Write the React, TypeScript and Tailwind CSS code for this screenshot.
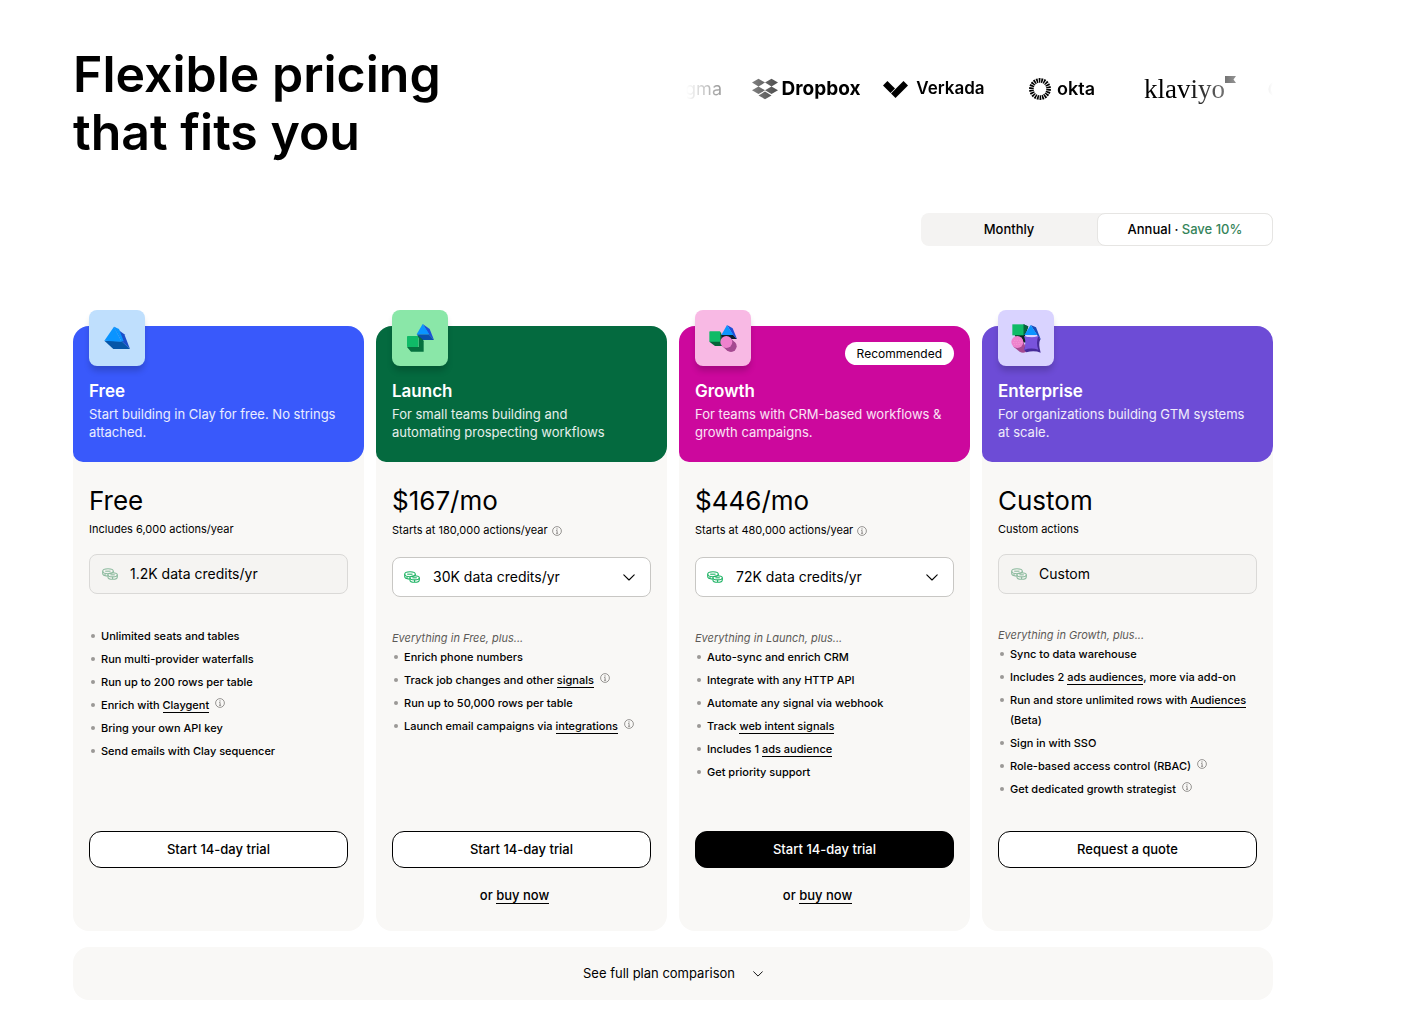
import { useState, type ReactNode } from "react";

interface Plan {
  name: string;
  description: ReactNode;
  headerClass: string;
  tileClass: string;
  art: ReactNode;
  recommended?: boolean;
  price: string;
  actions: string;
  actionsInfo?: boolean;
  credits: string;
  selectable?: boolean;
  inherits?: string;
  features: ReactNode[];
  cta: string;
  primary?: boolean;
  buyNow?: boolean;
}

const InfoIcon = () => (
  <svg
    viewBox="0 0 10 10"
    className="inline-block size-2.5 shrink-0 text-[#7d7b78]"
    fill="none"
    stroke="currentColor"
    aria-hidden="true"
  >
    <circle cx="5" cy="5" r="4.4" strokeWidth="0.8" />
    <path d="M4.2 4.5H5.1V7.3M4 7.3H6.1" strokeWidth="0.8" />
    <circle cx="5" cy="2.9" r="0.6" fill="currentColor" stroke="none" />
  </svg>
);

const FeatureInfo = () => (
  <span className="ml-1.5 inline-block align-[3px] leading-none">
    <InfoIcon />
  </span>
);

const Chevron = ({ className }: { className: string }) => (
  <svg
    viewBox="0 0 12 7"
    className={className}
    fill="none"
    stroke="currentColor"
    strokeWidth="1.1"
    strokeLinecap="round"
    strokeLinejoin="round"
    aria-hidden="true"
  >
    <path d="M0.8 0.8L6 6L11.2 0.8" />
  </svg>
);

const CoinsIcon = ({ className }: { className: string }) => (
  <svg
    viewBox="0 0 16 12"
    className={className}
    fill="none"
    stroke="currentColor"
    strokeWidth="1.1"
    aria-hidden="true"
  >
    <ellipse cx="6" cy="3.2" rx="5.3" ry="2.5" />
    <path d="M0.7 3.2V5.6C0.7 7 2.9 8 5.4 8.1M11.3 3.2V4.6M3 5.4V7.5" />
    <path d="M3.2 3.2H8.5" />
    <ellipse cx="10.6" cy="6.8" rx="4.7" ry="2.1" />
    <path d="M5.9 6.8V9C5.9 10.3 8 11.3 10.6 11.3S15.3 10.3 15.3 9V6.8M10.6 8.9V11.2" />
    <path d="M8.4 6.8H12.8" />
  </svg>
);

const TextLink = ({ children }: { children: ReactNode }) => (
  <a href="#" className="border-b border-black">
    {children}
  </a>
);

const FreeArt = () => (
  <svg viewBox="0 0 168 168" className="size-14" aria-hidden="true">
    <path d="M75 50L106 73L123 117L98 94Z" fill="#1b4fc9" />
    <path d="M46 92L98 94L123 117H73Z" fill="#0556a8" />
    <path d="M75 50L46 92L98 95Z" fill="#0a94ff" />
    <path d="M75 50L90 57L104 94H98Z" fill="#0a94ff" />
  </svg>
);

const LaunchArt = () => (
  <svg viewBox="0 0 168 168" className="size-14" aria-hidden="true">
    <path d="M92 42L113 57L126 90L110 73Z" fill="#1d4ed8" />
    <path d="M74 73H110L126 90H90Z" fill="#0a50ad" />
    <path d="M92 42L74 73H112Z" fill="#0a94ff" />
    <path d="M76 75L92 90L94 96L80 84Z" fill="#06261f" />
    <path d="M80 78L95 92V125H57L45 111H80Z" fill="#05713f" />
    <rect x="45" y="78" width="34" height="33" rx="2" fill="#0fbb67" />
  </svg>
);

const GrowthArt = () => (
  <svg viewBox="0 0 168 168" className="size-14" aria-hidden="true">
    <path d="M43 95L60 108H84L78 66Z" fill="#056338" />
    <path d="M78 74H114L126 87H80Z" fill="#081f2c" />
    <path d="M96 45L113 55L126 87L114 75Z" fill="#1d4ed8" />
    <path d="M96 45L79 75H115Z" fill="#0a94ff" />
    <rect x="43" y="64" width="33" height="31" rx="2" fill="#0fbb67" />
    <circle cx="108" cy="109" r="17" fill="#a54a91" />
    <path d="M82 109L107 84L120 98L97 122Z" fill="#a54a91" />
    <circle cx="94" cy="96" r="18" fill="#ee82cd" />
  </svg>
);

const EnterpriseArt = () => (
  <svg viewBox="0 0 168 168" className="size-14" aria-hidden="true">
    <path d="M50 74L77 43L91 50L80 80L125 88L110 96L60 98Z" fill="#06251f" />
    <path d="M77 43L91 49L80 75H77Z" fill="#07653e" />
    <path d="M98 45L114 52L129 90L117 75Z" fill="#194bb8" />
    <path d="M98 45L79 75H118Z" fill="#0a94ff" />
    <rect x="43" y="43" width="34" height="33" fill="#0fbb67" />
    <path d="M46 110L70 82L88 122Q78 132 65 125Z" fill="#a54a91" />
    <circle cx="58" cy="96" r="18" fill="#ee82cd" />
    <path
      d="M48 91H69M45 97H72M49 103H69"
      stroke="#fbb2dc"
      strokeWidth="2"
      strokeDasharray="2 3"
    />
    <path
      d="M121 79L127 88Q120 102 128 128Q108 120 85 127L78 119L84 100Z"
      fill="#472b99"
    />
    <path
      d="M78 78Q99 86 121 78Q113 99 121 119Q99 112 78 120Q86 99 78 78Z"
      fill="#7953dc"
    />
  </svg>
);

const DropboxLogo = () => (
  <span className="flex items-center gap-1">
    <svg
      viewBox="0 1 24 22"
      className="h-[22px] w-[26px] text-[#555]"
      fill="currentColor"
      preserveAspectRatio="none"
      aria-hidden="true"
    >
      <path d="M6 1.8L0 5.6l6 3.8 6-3.8zM18 1.8l-6 3.8 6 3.8 6-3.8zM0 13.3l6 3.8 6-3.8-6-3.8zM18 9.5l-6 3.8 6 3.8 6-3.8zM6 18.4l6 3.8 6-3.8-6-3.8z" />
    </svg>
    <span className="text-[19px] font-bold">Dropbox</span>
  </span>
);

const VerkadaLogo = () => (
  <span className="flex items-center gap-2">
    <svg viewBox="0 0 25 17" className="h-[17px] w-[25px]" aria-hidden="true">
      <path d="M0 4.4L4.4 0L12 7.6L7.5 12Z" />
      <path d="M20.5 0L25 4.4L12.5 17L8 12.6Z" />
    </svg>
    <span className="text-[17px] font-semibold">Verkada</span>
  </span>
);

const OktaLogo = () => (
  <span className="flex items-center gap-1.5">
    <svg viewBox="0 0 22 22" className="size-[22px]" aria-hidden="true">
      <circle
        cx="11"
        cy="11"
        r="8.6"
        fill="none"
        stroke="currentColor"
        strokeWidth="4.6"
        pathLength="66"
        strokeDasharray="2 1"
      />
    </svg>
    <span className="text-lg font-semibold">okta</span>
  </span>
);

const KlaviyoLogo = () => (
  <span className="flex items-start">
    <span className="font-['Liberation_Serif',serif] text-[27px] leading-[27px]">
      klaviyo
    </span>
    <svg viewBox="0 0 11 7" className="h-[7px] w-[11px]" aria-hidden="true">
      <path d="M0 0H11L8.5 3.5L11 7H0Z" />
    </svg>
  </span>
);

const plans: Plan[] = [
  {
    name: "Free",
    description: "Start building in Clay for free. No strings attached.",
    headerClass: "bg-[#3959fb]",
    tileClass: "bg-[#bfdffd]",
    art: <FreeArt />,
    price: "Free",
    actions: "Includes 6,000 actions/year",
    credits: "1.2K data credits/yr",
    features: [
      "Unlimited seats and tables",
      "Run multi-provider waterfalls",
      "Run up to 200 rows per table",
      <>
        Enrich with <TextLink>Claygent</TextLink>
        <FeatureInfo />
      </>,
      "Bring your own API key",
      "Send emails with Clay sequencer",
    ],
    cta: "Start 14-day trial",
  },
  {
    name: "Launch",
    description: (
      <>
        For small teams building and
        <br />
        automating prospecting workflows
      </>
    ),
    headerClass: "bg-[#046a3f]",
    tileClass: "bg-[#8ae7a8]",
    art: <LaunchArt />,
    price: "$167/mo",
    actions: "Starts at 180,000 actions/year",
    actionsInfo: true,
    credits: "30K data credits/yr",
    selectable: true,
    inherits: "Everything in Free, plus...",
    features: [
      "Enrich phone numbers",
      <>
        Track job changes and other <TextLink>signals</TextLink>
        <FeatureInfo />
      </>,
      "Run up to 50,000 rows per table",
      <>
        Launch email campaigns via <TextLink>integrations</TextLink>
        <FeatureInfo />
      </>,
    ],
    cta: "Start 14-day trial",
    buyNow: true,
  },
  {
    name: "Growth",
    description: "For teams with CRM-based workflows & growth campaigns.",
    headerClass: "bg-[#cc089d]",
    tileClass: "bg-[#f8b9e4]",
    art: <GrowthArt />,
    recommended: true,
    price: "$446/mo",
    actions: "Starts at 480,000 actions/year",
    actionsInfo: true,
    credits: "72K data credits/yr",
    selectable: true,
    inherits: "Everything in Launch, plus...",
    features: [
      "Auto-sync and enrich CRM",
      "Integrate with any HTTP API",
      "Automate any signal via webhook",
      <>
        Track <TextLink>web intent signals</TextLink>
      </>,
      <>
        Includes 1 <TextLink>ads audience</TextLink>
      </>,
      "Get priority support",
    ],
    cta: "Start 14-day trial",
    primary: true,
    buyNow: true,
  },
  {
    name: "Enterprise",
    description: "For organizations building GTM systems at scale.",
    headerClass: "bg-[#6d4cd6]",
    tileClass: "bg-[#d9d3ff]",
    art: <EnterpriseArt />,
    price: "Custom",
    actions: "Custom actions",
    credits: "Custom",
    inherits: "Everything in Growth, plus...",
    features: [
      "Sync to data warehouse",
      <>
        Includes 2 <TextLink>ads audiences</TextLink>, more via add-on
      </>,
      <>
        Run and store unlimited rows with <TextLink>Audiences</TextLink> (Beta)
      </>,
      "Sign in with SSO",
      <>
        Role-based access control (RBAC)
        <FeatureInfo />
      </>,
      <>
        Get dedicated growth strategist
        <FeatureInfo />
      </>,
    ],
    cta: "Request a quote",
  },
];

const Credits = ({ plan }: { plan: Plan }) => {
  if (!plan.selectable) {
    return (
      <div className="mt-4 flex h-10 items-center gap-3 rounded-lg border border-[#dad9d7] bg-[#f5f4f2] px-3 text-sm">
        <CoinsIcon className="h-3 w-4 text-[#8dbb9f]" />
        {plan.credits}
      </div>
    );
  }
  return (
    <div className="relative mt-4">
      <select
        aria-label={`${plan.name} data credits`}
        defaultValue={plan.credits}
        className="block h-10 w-full appearance-none rounded-lg border border-[#c8c7c4] bg-white pl-10 text-sm"
      >
        <option>{plan.credits}</option>
      </select>
      <CoinsIcon className="pointer-events-none absolute top-3.5 left-3 h-3 w-4 text-[#22b467]" />
      <Chevron className="pointer-events-none absolute top-[17px] right-4 h-[7px] w-3" />
    </div>
  );
};

const PlanCard = ({ plan }: { plan: Plan }) => (
  <article className="flex flex-col rounded-2xl bg-[#f9f8f6]">
    <header
      className={`relative flex flex-col rounded-2xl rounded-bl-[10px] px-4 pb-[21px] text-white ${plan.headerClass}`}
    >
      <div
        className={`-mt-4 size-14 rounded-lg shadow-[0_6px_6px_-1px_rgba(0,0,0,0.18)] ${plan.tileClass}`}
      >
        {plan.art}
      </div>
      {plan.recommended && (
        <span className="absolute top-4 right-4 flex h-[23px] items-center rounded-full bg-white px-3 text-xs text-black">
          Recommended
        </span>
      )}
      <h2 className="mt-[13px] text-[17px] leading-6 font-semibold">
        {plan.name}
      </h2>
      <p className="mt-0.5 min-h-9 text-[13px] leading-[18px] text-white/90">
        {plan.description}
      </p>
    </header>

    <div className="flex flex-1 flex-col px-4 pt-[23px] pb-[25px]">
      <p className="text-[26px] leading-8">{plan.price}</p>
      <p
        className={`mt-[3px] flex items-center gap-1 text-[11px] ${plan.actionsInfo ? "leading-[21px]" : "leading-[18px]"}`}
      >
        {plan.actions}
        {plan.actionsInfo && <InfoIcon />}
      </p>
      <Credits plan={plan} />

      <div className="mt-8">
        {plan.inherits && (
          <p className="text-[11px] leading-[18px] text-[#5c5a57] italic">
            {plan.inherits}
          </p>
        )}
        <ul className="flex flex-col gap-[3px] text-[11px] leading-5 font-medium">
          {plan.features.map((feature, i) => (
            <li key={i} className="flex gap-1">
              <span className="mx-0.5 mt-2 size-1 shrink-0 rounded-full bg-[#9b9996]" />
              <span>{feature}</span>
            </li>
          ))}
        </ul>
      </div>

      <div className="mt-auto min-h-[107px] pt-8">
        <button
          type="button"
          className={`block h-[37px] w-full rounded-xl border border-black text-[13px] font-medium ${
            plan.primary ? "bg-black text-white" : "bg-white text-black"
          }`}
        >
          {plan.cta}
        </button>
        {plan.buyNow && (
          <p className="mt-4 pr-3.5 text-center text-[13px] leading-[22px] font-medium">
            or <TextLink>buy now</TextLink>
          </p>
        )}
      </div>
    </div>
  </article>
);

const LogoStrip = () => (
  <div className="flex h-[88px] w-[587px] items-center overflow-hidden [mask-image:linear-gradient(to_right,transparent,black_88px,black_calc(100%-88px),transparent)]">
    <span className="flex w-14 shrink-0 justify-end pr-5 text-lg">gma</span>
    <span className="flex w-32 shrink-0 justify-center">
      <DropboxLogo />
    </span>
    <span className="flex w-32 shrink-0 justify-center">
      <VerkadaLogo />
    </span>
    <span className="flex w-32 shrink-0 justify-center">
      <OktaLogo />
    </span>
    <span className="flex w-32 shrink-0 justify-center">
      <KlaviyoLogo />
    </span>
    <svg viewBox="0 0 20 20" className="ml-3.5 size-4 shrink-0" aria-hidden="true">
      <circle cx="10" cy="10" r="8" fill="none" stroke="currentColor" strokeWidth="3" />
    </svg>
  </div>
);

export default function App() {
  const [billing, setBilling] = useState<"monthly" | "annual">("annual");

  const tabClass = (active: boolean) =>
    `flex-1 rounded-lg border ${
      active ? "border-[#e6e5e3] bg-white" : "border-transparent"
    }`;

  return (
    <main className="min-h-screen bg-white pt-[45px] pr-[138px] pb-[27px] pl-[73px] font-[Inter,sans-serif] text-black">
      <div className="flex items-start justify-between">
        <h1 className="text-[50px] leading-[58px] font-semibold">
          Flexible pricing
          <br />
          that fits you
        </h1>
        <LogoStrip />
      </div>

      <div className="mt-[52px] flex justify-end">
        <div className="flex h-[33px] w-[352px] rounded-lg bg-[#f4f3f2] text-[13px] font-medium">
          <button
            type="button"
            aria-pressed={billing === "monthly"}
            onClick={() => setBilling("monthly")}
            className={tabClass(billing === "monthly")}
          >
            Monthly
          </button>
          <button
            type="button"
            aria-pressed={billing === "annual"}
            onClick={() => setBilling("annual")}
            className={tabClass(billing === "annual")}
          >
            Annual · <span className="text-[#35845a]">Save 10%</span>
          </button>
        </div>
      </div>

      <section className="mt-20 grid grid-cols-4 gap-3">
        {plans.map((plan) => (
          <PlanCard key={plan.name} plan={plan} />
        ))}
      </section>

      <button
        type="button"
        className="mt-4 flex h-[53px] w-full items-center justify-center gap-[18px] rounded-2xl bg-[#f9f8f6] text-[13px]"
      >
        See full plan comparison
        <Chevron className="h-1.5 w-2.5" />
      </button>
    </main>
  );
}
